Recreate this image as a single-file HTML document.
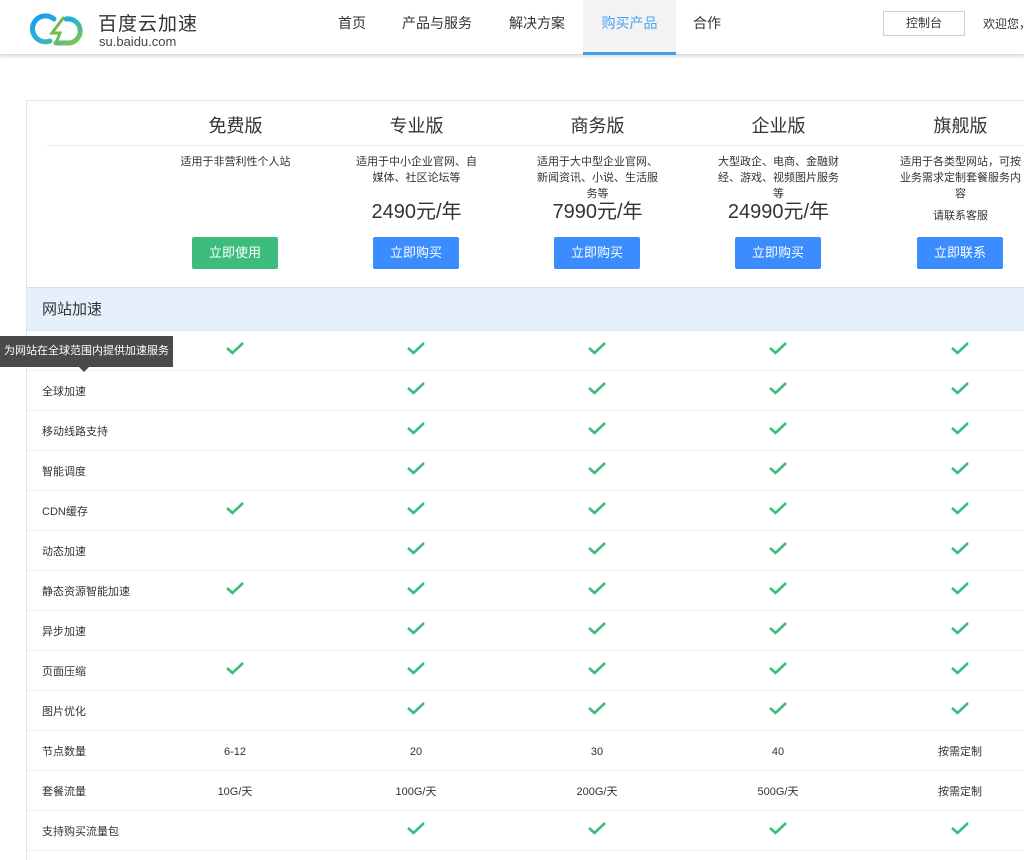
<!DOCTYPE html>
<html><head><meta charset="utf-8"><style>
*{margin:0;padding:0;box-sizing:border-box}
body{width:1024px;height:840px;overflow:hidden;background:#fff;font-family:"Liberation Sans","Noto Sans CJK SC",sans-serif;color:#333;position:relative}
.nav{position:absolute;left:0;top:0;width:1024px;height:55px;background:#fff;border-bottom:1px solid #ddd;box-shadow:0 2px 3px rgba(0,0,0,.12)}
.nav a{position:absolute;top:0;height:55px;line-height:47px;font-size:14px;color:#333;text-align:center}
.act{background:#f3f3f3;color:#4aa3f5!important;border-bottom:3px solid #3fa0f0}
.tbl{position:absolute;left:26px;top:100px;width:1010px;height:760px;border-left:1px solid #dde3ee;border-top:1px solid #dde3ee}
.abs{position:absolute}
.c{text-align:center}
.title{font-size:18px;color:#333}
.desc{font-size:11px;line-height:16px;color:#333}
.price{font-size:20px;color:#333}
.btn{position:absolute;width:86px;height:32px;line-height:32px;color:#fff;font-size:13px;text-align:center;border-radius:2px;background:#3a8cff}
.row{position:absolute;left:0;width:1010px;height:40px;border-bottom:1px solid #eceff4}
.row .l{position:absolute;left:15px;top:0;line-height:42px;font-size:11px;color:#333}
.row .v{position:absolute;top:0;width:120px;margin-left:-60px;line-height:42px;font-size:11px;text-align:center}
.row svg{position:absolute;top:10px;margin-left:-10px}
</style></head><body>
<div class="nav">
<svg class="abs" style="left:30px;top:11px" width="58" height="38" viewBox="0 0 58 38">
<defs><linearGradient id="g" x1="0" y1="0" x2="1" y2="1"><stop offset="0" stop-color="#1e9be8"/><stop offset=".5" stop-color="#27b0d9"/><stop offset="1" stop-color="#8cc63f"/></linearGradient></defs>
<path d="M20 30 A13 13 0 1 1 24 8 M36 8 A12 12 0 1 1 40 32 L26 32" fill="none" stroke="url(#g)" stroke-width="5" stroke-linecap="round"/>
<path d="M34 6 L22 22 L30 22 L26 32" fill="none" stroke="#6cc04a" stroke-width="3"/>
</svg>
<div class="abs" style="left:98px;top:9px;font-size:19px;color:#333;letter-spacing:1px">百度云加速</div>
<div class="abs" style="left:99px;top:34px;font-size:13px;color:#444">su.baidu.com</div>
<a style="left:327px;width:50px">首页</a>
<a style="left:392px;width:90px">产品与服务</a>
<a style="left:497px;width:80px">解决方案</a>
<a class="act" style="left:583px;width:93px;height:55px">购买产品</a>
<a style="left:682px;width:50px">合作</a>
<div class="abs" style="left:883px;top:11px;width:82px;height:25px;border:1px solid #ccd;line-height:23px;text-align:center;font-size:12px">控制台</div>
<div class="abs" style="left:983px;top:15px;font-size:12px;white-space:nowrap">欢迎您，</div>
</div>

<div class="tbl">
<div class="abs" style="left:20px;top:44px;width:990px;border-top:1px solid #e8ebf0"></div>
<div class="abs title c" style="left:118px;top:11px;width:181px">免费版</div>
<div class="abs title c" style="left:299px;top:11px;width:181px">专业版</div>
<div class="abs title c" style="left:480px;top:11px;width:181px">商务版</div>
<div class="abs title c" style="left:661px;top:11px;width:181px">企业版</div>
<div class="abs title c" style="left:843px;top:11px;width:181px">旗舰版</div>

<div class="abs desc c" style="left:138px;top:53px;width:141px">适用于非营利性个人站</div>
<div class="abs desc c" style="left:324px;top:53px;width:131px">适用于中小企业官网、自媒体、社区论坛等</div>
<div class="abs desc c" style="left:506px;top:53px;width:129px">适用于大中型企业官网、新闻资讯、小说、生活服务等</div>
<div class="abs desc c" style="left:688px;top:53px;width:127px">大型政企、电商、金融财经、游戏、视频图片服务等</div>
<div class="abs desc c" style="left:868px;top:53px;width:131px">适用于各类型网站，可按业务需求定制套餐服务内容</div>

<div class="abs price c" style="left:299px;top:94px;width:181px">2490元/年</div>
<div class="abs price c" style="left:480px;top:94px;width:181px">7990元/年</div>
<div class="abs price c" style="left:661px;top:94px;width:181px">24990元/年</div>
<div class="abs c" style="left:843px;top:106px;width:181px;font-size:11px">请联系客服</div>

<div class="btn" style="left:165px;top:136px;background:#3dbd7d">立即使用</div>
<div class="btn" style="left:346px;top:136px">立即购买</div>
<div class="btn" style="left:527px;top:136px">立即购买</div>
<div class="btn" style="left:708px;top:136px">立即购买</div>
<div class="btn" style="left:890px;top:136px">立即联系</div>

<div class="abs" style="left:0;top:186px;width:1010px;height:44px;background:#e6f0fc;border-top:1px solid #d3dff0;border-bottom:1px solid #dde6f2;font-size:15px;line-height:43px;padding-left:15px;color:#333">网站加速</div>
<div id="rows"></div>
</div>

<div class="abs" style="left:0;top:336px;width:173px;height:31px;background:#4a4a4a;color:#fff;font-size:11px;line-height:31px;padding-left:4px">为网站在全球范围内提供加速服务</div>
<div class="abs" style="left:79px;top:367px;width:0;height:0;border-left:5px solid transparent;border-right:5px solid transparent;border-top:5px solid #4a4a4a"></div>

<script>
var ck='<svg width="20" height="14" viewBox="0 0 20 14"><path d="M2 7 L7.5 12 L18 2" fill="none" stroke="#3dbd7d" stroke-width="2.6"/></svg>';
var xs=[208,389,570,751,933];
var R=[["网站加速",[1,1,1,1,1]],["全球加速",[0,1,1,1,1]],["移动线路支持",[0,1,1,1,1]],["智能调度",[0,1,1,1,1]],["CDN缓存",[1,1,1,1,1]],["动态加速",[0,1,1,1,1]],["静态资源智能加速",[1,1,1,1,1]],["异步加速",[0,1,1,1,1]],["页面压缩",[1,1,1,1,1]],["图片优化",[0,1,1,1,1]],["节点数量",["6-12","20","30","40","按需定制"]],["套餐流量",["10G/天","100G/天","200G/天","500G/天","按需定制"]],["支持购买流量包",[0,1,1,1,1]]];
var h='';
R.forEach(function(r,i){h+='<div class="row" style="top:'+(230+i*40)+'px"><div class="l">'+r[0]+'</div>';
r[1].forEach(function(v,j){if(v===1)h+='<div style="position:absolute;left:'+xs[j]+'px;top:0">'+ck+'</div>';else if(v)h+='<div class="v" style="left:'+xs[j]+'px">'+v+'</div>';});h+='</div>';});
document.getElementById('rows').innerHTML=h;
</script>
</body></html>
